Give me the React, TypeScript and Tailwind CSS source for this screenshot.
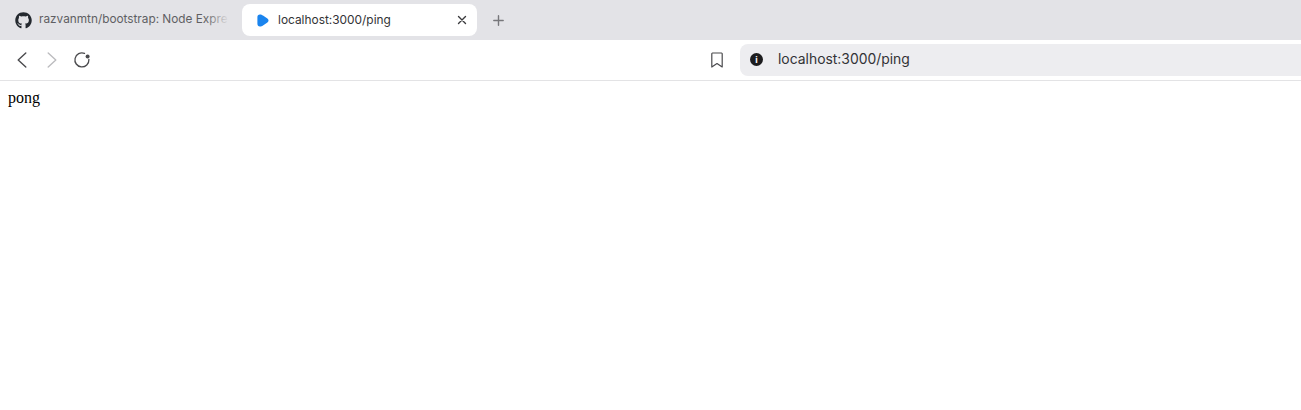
import { FaGithub } from "react-icons/fa";

export default function App() {
  return (
    <div className="h-[410px] w-[1301px] overflow-hidden bg-white font-['Inter',sans-serif]">
      {/* tab strip */}
      <div className="flex h-10 items-center bg-[#e3e3e7] pl-[15px]">
        <div className="flex w-[227px] items-center">
          <FaGithub className="h-[17px] w-[17px] shrink-0 text-[#24292f]" />
          <div className="relative ml-[7px] w-[190px] whitespace-nowrap text-[11.8px] text-[#5f5f63]">
            razvanmtn/bootstrap: Node Expre
            <div className="absolute inset-y-0 right-0 w-6 bg-gradient-to-r from-transparent to-[#e3e3e7]" />
          </div>
        </div>
        <div className="flex h-8 w-[235px] items-center rounded-lg bg-white pl-[15px] pr-[10px]">
          <svg className="h-[13px] w-3 shrink-0" viewBox="0 0 12 13">
            <path d="M3 0.5 C1.2 0.5 0.4 1.6 0.4 3.2 L0.4 9.8 C0.4 11.4 1.2 12.5 3 12.5 C4.2 12.5 5 12 6 11.4 L10.4 8.4 C11.9 7.4 11.9 5.6 10.4 4.6 L6 1.6 C5 1 4.2 0.5 3 0.5 Z" fill="#1a84ee" />
          </svg>
          <span className="ml-[9px] flex-1 whitespace-nowrap text-[11.9px] text-[#333336]">localhost:3000/ping</span>
          <svg className="h-[10px] w-[10px]" viewBox="0 0 10 10" stroke="#3a3a3d" strokeWidth="1.4" strokeLinecap="round">
            <path d="M1.5 1.5 L8.5 8.5 M8.5 1.5 L1.5 8.5" />
          </svg>
        </div>
        <svg className="ml-[16px] h-[11px] w-[11px]" viewBox="0 0 11 11" stroke="#77777b" strokeWidth="1.4" strokeLinecap="round">
          <path d="M5.5 0.8 V10.2 M0.8 5.5 H10.2" />
        </svg>
      </div>

      {/* toolbar */}
      <div className="flex h-[41px] items-center border-b border-[#e3e3e5] pb-[1px]">
        <div className="flex items-center pl-[17px]">
          <svg className="h-4 w-[10px]" viewBox="0 0 10 16" fill="none" stroke="#4a4a4d" strokeWidth="1.4" strokeLinecap="round" strokeLinejoin="round">
            <path d="M8.8 1 L1.2 8 L8.8 15" />
          </svg>
          <svg className="ml-[20px] h-4 w-[10px]" viewBox="0 0 10 16" fill="none" stroke="#bcbcbf" strokeWidth="1.4" strokeLinecap="round" strokeLinejoin="round">
            <path d="M1.2 1 L8.8 8 L1.2 15" />
          </svg>
          <svg className="ml-[16px] h-[18px] w-[18px]" viewBox="0 0 18 18" fill="none" stroke="#4a4a4d" strokeWidth="1.3" strokeLinecap="round">
            <path d="M15.9 8.5 A7 7 0 1 1 11.5 2.4" />
            <circle cx="14.6" cy="5.4" r="2" fill="#4a4a4d" stroke="none" />
          </svg>
        </div>
        <div className="ml-auto flex items-center">
          <svg className="h-4 w-3" viewBox="0 0 12 16" fill="none" stroke="#4a4a4d" strokeWidth="1.2" strokeLinejoin="round">
            <path d="M1.5 1 H10.5 A0.8 0.8 0 0 1 11.2 1.8 V15 L6 11.5 L0.8 15 V1.8 A0.8 0.8 0 0 1 1.5 1 Z" />
          </svg>
          <div className="ml-[17px] flex h-8 w-[561px] items-center rounded-l-lg bg-[#ededf0] pl-[10px]">
            <div className="flex h-[13px] w-[13px] items-center justify-center rounded-full bg-[#1c1c1e] text-[9px] font-bold leading-none text-white">i</div>
            <span className="ml-[15px] whitespace-nowrap text-[13.9px] text-[#333336]">localhost:3000/ping</span>
          </div>
        </div>
      </div>

      {/* page body */}
      <div className="px-2 pt-[5px] font-['Liberation_Serif',serif] text-base text-black">pong</div>
    </div>
  );
}
